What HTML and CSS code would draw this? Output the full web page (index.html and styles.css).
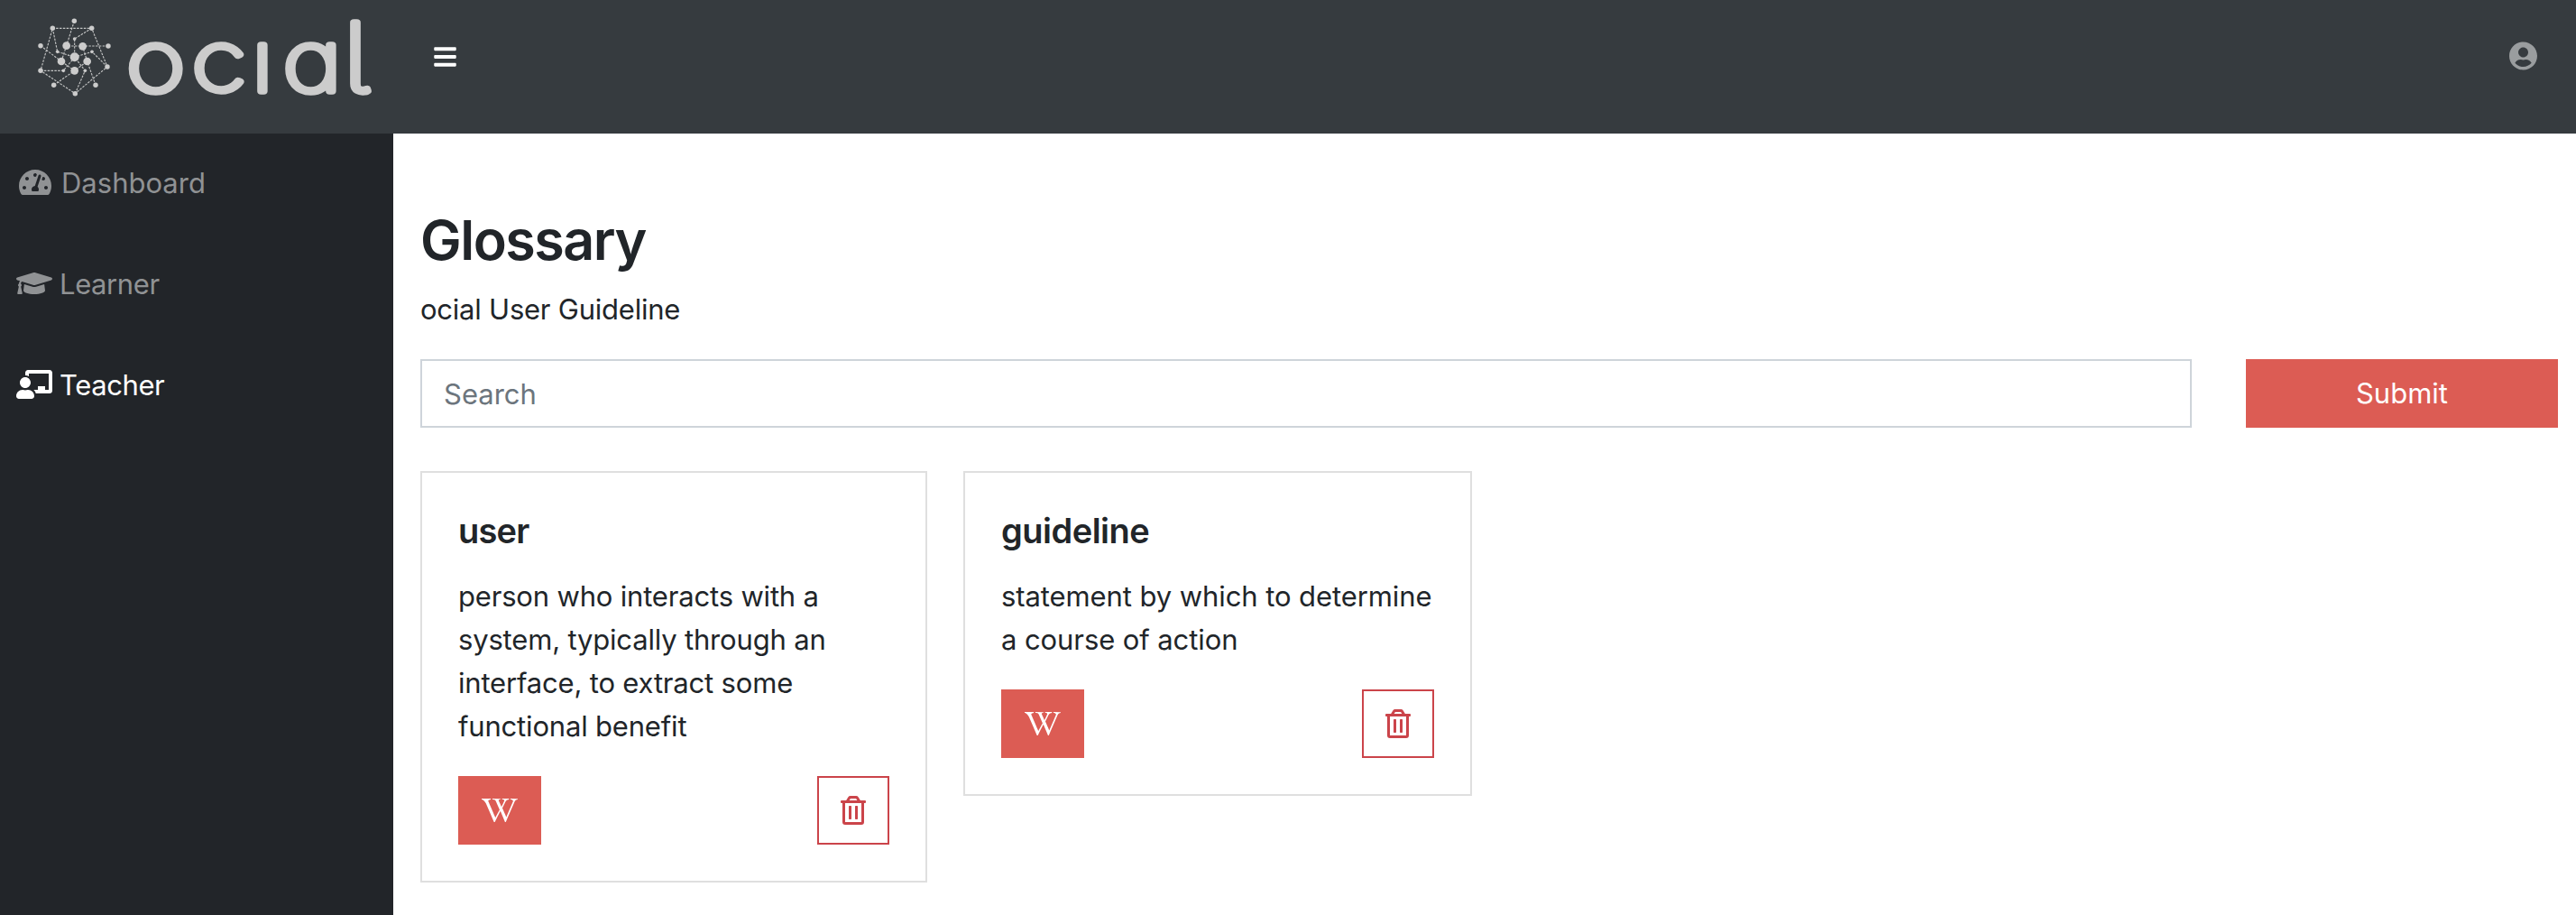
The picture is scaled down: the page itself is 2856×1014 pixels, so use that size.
FILE: index.html
```html
<!DOCTYPE html>
<html lang="en">
<head>
<meta charset="utf-8">
<title>ocial - Glossary</title>
<link rel="stylesheet" href="styles.css">
</head>
<body>
<svg class="sprite" aria-hidden="true">
  <symbol id="wiki" viewBox="0 0 640 512"><path d="M640 51.2l-.3 12.2c-28.1.8-45 15.8-55.8 40.3-25 57.8-103.3 240-155.3 358.6H415l-81.9-193.1c-32.5 63.6-68.3 130-99.2 193.1-.3.3-15 0-15-.3C172 352.3 122.8 243.4 75.8 133.4 64.4 106.7 26.4 63.4.2 63.7c0-3.1-.3-10-.3-14.2h161.9v13.9c-19.2 1.1-52.8 13.3-43.3 34.2 21.9 49.7 103.6 240.3 125.6 288.6 15-29.7 57.8-109.2 75.3-142.8-13.9-28.3-58.6-133.9-72.8-160-9.7-17.8-36.1-19.4-55.8-19.7V49.8l142.5.3v13.1c-19.4.6-38.1 7.8-29.4 26.1 18.9 40 30.6 68.1 48.1 104.7 5.6-10.8 34.7-69.4 48.1-100.8 8.9-20.6-3.9-28.6-38.6-29.4.3-3.6 0-10.3.3-13.6 44.4-.3 111.1-.3 123.1-.6v13.6c-22.5.8-45.8 12.8-58.1 31.7l-59.2 122.8c6.4 16.1 63.3 142.8 69.2 156.7L559.2 91.8c-8.6-23.1-36.4-28.1-47.2-28.3V49.6l127.8 1.1.2.5z"/></symbol>
  <symbol id="trash" viewBox="0 0 448 512"><path d="M268 416h24a12 12 0 0 0 12-12V188a12 12 0 0 0-12-12h-24a12 12 0 0 0-12 12v216a12 12 0 0 0 12 12zM432 80h-82.41l-34-56.7A48 48 0 0 0 274.41 0H173.59a48 48 0 0 0-41.16 23.3L98.41 80H16A16 16 0 0 0 0 96v16a16 16 0 0 0 16 16h16v336a48 48 0 0 0 48 48h288a48 48 0 0 0 48-48V128h16a16 16 0 0 0 16-16V96a16 16 0 0 0-16-16zM171.84 50.91A6 6 0 0 1 177 48h94a6 6 0 0 1 5.15 2.91L293.61 80H154.39zM368 464H80V128h288zm-212-48h24a12 12 0 0 0 12-12V188a12 12 0 0 0-12-12h-24a12 12 0 0 0-12 12v216a12 12 0 0 0 12 12z"/></symbol>
</svg>

<header class="topbar">
  <svg class="logo" viewBox="30 10 400 110" role="img" aria-label="ocial">
    <g transform="translate(30 10) scale(.33333)">
      <g class="mesh-lines">
        <path d="M85 64H215L267 192 160 281 45 205Z"/>
        <path d="M157 40 131 122M270 123H131M45 122 114 174M89 253 158 205M228 253 200 174"/>
        <path d="M215 64 158 99V160M85 64 101 142 158 160M267 192 216 142 158 160M160 281 193 205 158 160M45 205H121L158 160"/>
        <path d="M131 122 114 174 158 205 200 174 185 124"/>
      </g>
      <circle cx="157" cy="40" r="8.2"/><circle cx="85" cy="64" r="8.2"/><circle cx="215" cy="64" r="8.2"/>
      <circle cx="45" cy="122" r="8.2"/><circle cx="270" cy="123" r="8.2"/><circle cx="45" cy="205" r="8.2"/>
      <circle cx="267" cy="192" r="8.2"/><circle cx="89" cy="253" r="8.2"/><circle cx="228" cy="253" r="8.2"/>
      <circle cx="160" cy="281" r="8.2"/>
      <circle cx="158" cy="99" r="5.5"/><circle cx="101" cy="142" r="5.5"/><circle cx="216" cy="142" r="5.5"/>
      <circle cx="121" cy="205" r="5.5"/><circle cx="193" cy="205" r="5.5"/>
      <circle cx="131" cy="122" r="13"/><circle cx="185" cy="124" r="13"/><circle cx="114" cy="174" r="13"/>
      <circle cx="200" cy="174" r="13"/><circle cx="158" cy="205" r="13"/><circle cx="158" cy="160" r="15"/>
    </g>
    <text class="wordmark" transform="scale(1.2 1)" y="101.2" x="116.6 177 232.2 261.2">ocıa<tspan class="tall" x="317">l</tspan></text>
  </svg>
  <svg class="menu" viewBox="0 0 448 512"><path d="M16 132h416c8.800 0 16-7.200 16-16V76c0-8.800-7.200-16-16-16H16C7.200 60 0 67.200 0 76v40c0 8.800 7.200 16 16 16zm0 160h416c8.800 0 16-7.200 16-16v-40c0-8.800-7.200-16-16-16H16c-8.800 0-16 7.200-16 16v40c0 8.800 7.200 16 16 16zm0 160h416c8.800 0 16-7.200 16-16v-40c0-8.800-7.200-16-16-16H16c-8.800 0-16 7.200-16 16v40c0 8.800 7.200 16 16 16z"/></svg>
  <svg class="account" viewBox="0 0 496 512"><path d="M248 8C111 8 0 119 0 256s111 248 248 248 248-111 248-248S385 8 248 8zm0 96c48.600 0 88 39.400 88 88s-39.400 88-88 88-88-39.400-88-88 39.400-88 88-88zm0 344c-58.700 0-111.300-26.600-146.500-68.200 18.800-35.400 55.600-59.800 98.500-59.800 2.400 0 4.800.4 7.100 1.100 13 4.200 26.600 6.900 40.900 6.900 14.300 0 28-2.700 40.900-6.900 2.300-.7 4.700-1.100 7.100-1.100 42.900 0 79.700 24.400 98.500 59.800C359.300 421.400 306.700 448 248 448z"/></svg>
</header>

<div class="layout">
  <nav class="sidebar">
    <a class="nav-item">
      <span class="nav-icon"><svg width="36" height="32" viewBox="0 0 576 512"><path d="M288 32C128.940 32 0 160.940 0 320c0 52.800 14.250 102.260 39.060 144.800 5.610 9.620 16.300 15.200 27.440 15.200h443c11.140 0 21.830-5.580 27.440-15.200C561.750 422.260 576 372.800 576 320c0-159.060-128.940-288-288-288zm0 64c14.710 0 26.580 10.130 30.320 23.650-1.110 2.260-2.640 4.230-3.450 6.670l-9.220 27.670c-5.130 3.490-10.970 6.010-17.640 6.010-17.670 0-32-14.330-32-32S270.330 96 288 96zM96 384c-17.670 0-32-14.330-32-32s14.330-32 32-32 32 14.330 32 32-14.330 32-32 32zm48-160c-17.670 0-32-14.330-32-32s14.330-32 32-32 32 14.330 32 32-14.330 32-32 32zm246.770-72.410l-61.330 184C343.130 347.330 352 364.540 352 384c0 11.720-3.380 22.550-8.880 32H232.880c-5.500-9.450-8.880-20.280-8.880-32 0-33.940 26.500-61.430 59.900-63.590l61.340-184.010c4.170-12.560 17.730-19.450 30.360-15.170 12.570 4.190 19.350 17.790 15.170 30.360zm14.660 57.200l15.520-46.550c3.470-1.290 7.130-2.230 11.050-2.230 17.670 0 32 14.330 32 32s-14.330 32-32 32c-11.380-.01-20.890-6.280-26.570-15.220zM480 384c-17.670 0-32-14.330-32-32s14.330-32 32-32 32 14.330 32 32-14.330 32-32 32z"/></svg></span>
      <span class="nav-label">Dashboard</span>
    </a>
    <a class="nav-item tight">
      <span class="nav-icon"><svg width="40" height="32" viewBox="0 0 640 512"><path d="M622.340 153.200L343.400 67.500c-15.200-4.670-31.600-4.670-46.790 0L17.660 153.200c-23.540 7.230-23.540 38.360 0 45.590l48.630 14.940c-10.670 13.190-17.230 29.280-17.880 46.900C38.780 266.150 32 276.110 32 288c0 10.780 5.680 19.850 13.860 25.650L20.330 428.530C18.110 438.520 25.710 448 35.940 448h56.110c10.240 0 17.840-9.480 15.620-19.470L82.140 313.650C90.320 307.850 96 298.780 96 288c0-11.570-6.470-21.250-15.660-26.870.76-15.020 8.440-28.300 20.690-36.720L296.600 284.500c9.060 2.780 26.440 6.250 46.790 0l278.950-85.700c23.550-7.240 23.550-38.360 0-45.600zM352.790 315.090c-28.530 8.760-52.840 3.920-65.590 0l-145.020-44.550L128 384c0 35.350 85.960 64 192 64s192-28.650 192-64l-14.180-113.470-145.030 44.560z"/></svg></span>
      <span class="nav-label">Learner</span>
    </a>
    <a class="nav-item tight active">
      <span class="nav-icon"><svg width="40" height="32" viewBox="0 0 640 512"><path d="M208 352c-2.390 0-4.780.35-7.060 1.090C187.980 357.300 174.350 360 160 360c-14.350 0-27.980-2.700-40.950-6.910-2.280-.74-4.660-1.090-7.050-1.090C49.940 352-.33 402.480 0 464.620.14 490.880 21.730 512 48 512h224c26.270 0 47.860-21.120 48-47.380.33-62.140-49.940-112.620-112-112.620zm-48-32c53.020 0 96-42.980 96-96s-42.980-96-96-96-96 42.980-96 96 42.980 96 96 96zM592 0H208c-26.470 0-48 22.250-48 49.590V96c23.420 0 45.100 6.780 64 17.800V64h352v288h-64v-64H384v64h-76.240c19.100 16.690 33.120 38.730 39.690 64H592c26.470 0 48-22.250 48-49.590V49.590C640 22.250 618.470 0 592 0z"/></svg></span>
      <span class="nav-label">Teacher</span>
    </a>
  </nav>

  <main class="content">
    <h1 class="title">Glossary</h1>
    <p class="subtitle">ocial User Guideline</p>
    <form class="search">
      <input class="search-input" type="text" placeholder="Search">
      <button class="submit" type="button">Submit</button>
    </form>
    <div class="cards">
      <article class="card">
        <h2 class="term user">user</h2>
        <p class="definition">person who interacts with a system, typically through an interface, to extract some functional benefit</p>
        <div class="actions">
          <a class="btn-wiki"><svg width="40" height="32"><use href="#wiki"/></svg></a>
          <a class="btn-delete"><svg width="28" height="32"><use href="#trash"/></svg></a>
        </div>
      </article>
      <article class="card wide">
        <h2 class="term">guideline</h2>
        <p class="definition">statement by which to determine a course of action</p>
        <div class="actions">
          <a class="btn-wiki"><svg width="40" height="32"><use href="#wiki"/></svg></a>
          <a class="btn-delete"><svg width="28" height="32"><use href="#trash"/></svg></a>
        </div>
      </article>
    </div>
  </main>
</div>
</body>
</html>
```
FILE: styles.css
```css
* { box-sizing: border-box; }

body {
  margin: 0;
  min-height: 100vh;
  display: flex;
  flex-direction: column;
  background: #fff;
  color: #212529;
  font: 400 31px/48px Inter, "Liberation Sans", sans-serif;
}

h1, h2, p { margin: 0; }
svg { display: block; fill: currentColor; }
.sprite { display: none; }

.topbar {
  display: flex;
  align-items: flex-start;
  height: 148px;
  padding: 10px 43px 0 30px;
  background: #363b3f;
  color: #fff;
}
.logo { width: 400px; height: 110px; color: #ccc; overflow: visible; }
.mesh-lines { fill: none; stroke: #c4c5c5; stroke-width: 3.4; stroke-dasharray: 7.5 4; }
.wordmark {
  font: 100 94px Inter, sans-serif;
  font-feature-settings: "cv05", "cv11";
  stroke: #ccc;
  stroke-width: 7.4px;
  stroke-linejoin: round;
}
.tall { font-size: 104px; }
.menu { width: 25px; height: 28px; margin: 39px 0 0 51px; }
.account { width: 31px; height: 32px; margin: 36px 0 0 auto; color: #9a9d9f; }

.layout { display: flex; flex: 1; }

.sidebar {
  flex: none;
  width: 436px;
  background: #222529;
  color: #909294;
}
.nav-item {
  display: flex;
  align-items: center;
  gap: 9px;
  height: 112px;
  padding: 0 18px 4px;
}
.nav-icon { display: flex; justify-content: center; width: 41px; }
.nav-label { padding-top: 1px; }
.tight { gap: 8px; letter-spacing: -0.4px; }
.tight .nav-icon { width: 40px; }
.active { color: #fff; }

.content { flex: 1; padding: 80px 20px 0 30px; }
.title { font-size: 61px; font-weight: 560; line-height: 76px; letter-spacing: -1.5px; }
.subtitle { margin: 15px 0 31px; letter-spacing: -0.23px; }

.search { display: flex; gap: 60px; }
.search-input {
  flex: 1;
  height: 76px;
  padding: 0 24px;
  border: 2px solid #ced4da;
  border-radius: 0;
  font: inherit;
}
.search-input::placeholder { color: #6c757d; opacity: 1; }
.submit {
  width: 346px;
  height: 76px;
  padding: 0;
  border: 0;
  background: #dc5c54;
  color: #fff;
  font: inherit;
}

.cards { display: flex; align-items: flex-start; gap: 40px; margin-top: 48px; }
.card { width: 562px; padding: 40px; border: 2px solid #dfdfdf; }
.wide { width: 564px; }
.term { margin-bottom: 25px; font-size: 38px; font-weight: 560; line-height: 48px; letter-spacing: -0.5px; }
.user { letter-spacing: -0.8px; }
.definition { letter-spacing: -0.18px; }
.wide .definition { letter-spacing: -0.09px; margin-right: -4px; }
.actions { display: flex; justify-content: space-between; margin-top: 31px; }
.btn-wiki, .btn-delete { display: flex; align-items: center; justify-content: center; height: 76px; }
.btn-wiki { width: 92px; background: #dc5c54; color: #fff; }
.btn-delete { width: 80px; border: 2px solid #cb444a; color: #cb444a; }
```
